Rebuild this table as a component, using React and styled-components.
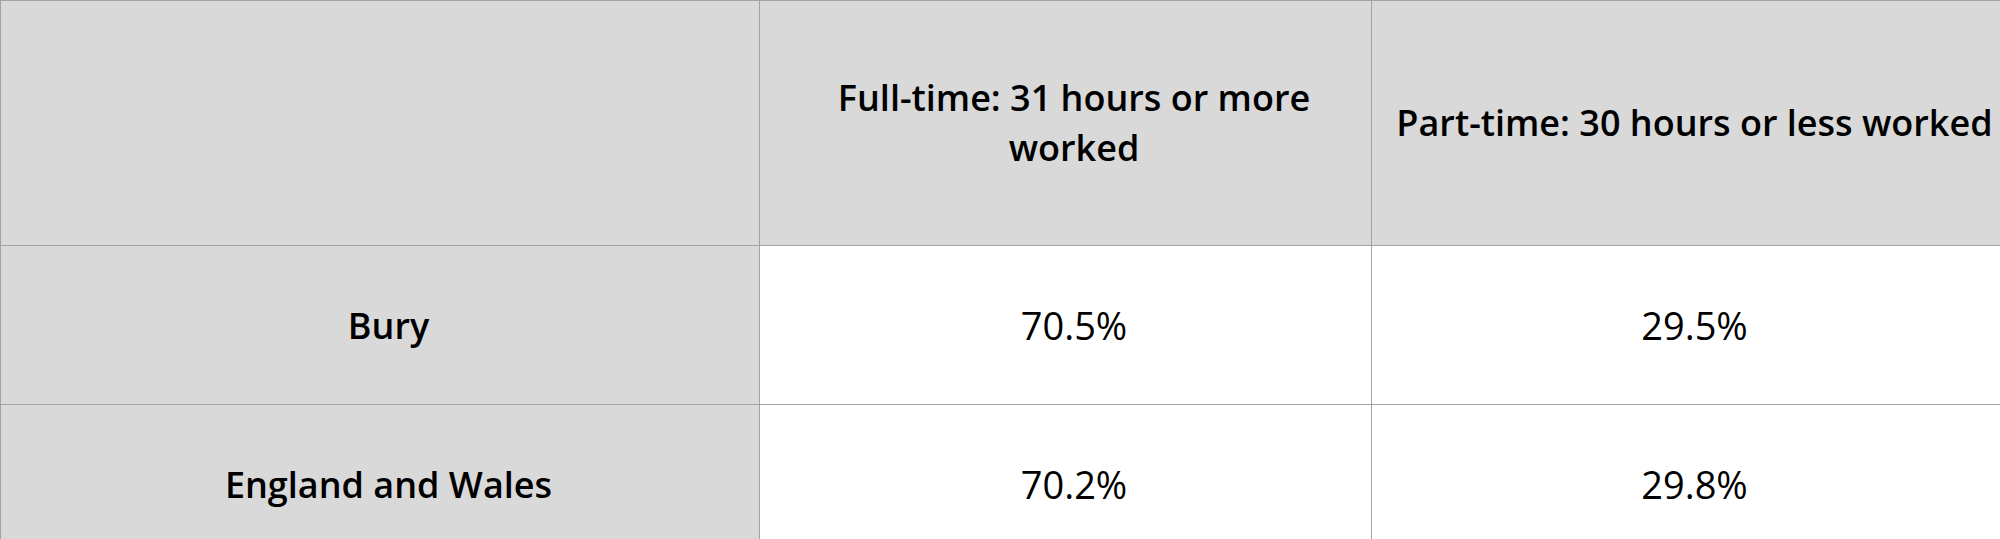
import styled, { createGlobalStyle } from "styled-components";

const GlobalStyle = createGlobalStyle`
  html, body {
    margin: 0;
    padding: 0;
    background: #ffffff;
    overflow: hidden;
  }
`;

const Table = styled.table`
  width: 2000px;
  table-layout: fixed;
  border-collapse: collapse;
  font-family: "Open Sans", "Liberation Sans", sans-serif;
  color: #000;
`;

const Col = styled.col`
  width: ${(p) => p.$w}px;
`;

const Row = styled.tr`
  height: ${(p) => p.$h}px;
`;

const Cell = styled.td`
  padding: 0 0 0 17px;
  border: 1px solid #a3a3a3;
  text-align: center;
  vertical-align: middle;
  background: ${(p) => (p.$shaded ? "#d9d9d9" : "#ffffff")};
  font-size: ${(p) => (p.$bold ? "36px" : "38px")};
  font-weight: ${(p) => (p.$bold ? 600 : 400)};
`;

const HeadCell = styled.th`
  padding: 0 0 0 17px;
  border: 1px solid #a3a3a3;
  text-align: center;
  vertical-align: middle;
  background: #d9d9d9;
  font-size: 36px;
  line-height: 50px;
  font-weight: 600;
`;

const rows = [
  { area: "Bury", full: "70.5%", part: "29.5%" },
  { area: "England and Wales", full: "70.2%", part: "29.8%" },
];

export default function App() {
  return (
    <>
      <GlobalStyle />
      <Table>
        <colgroup>
          <Col $w={759} />
          <Col $w={612} />
          <Col $w={629} />
        </colgroup>
        <thead>
          <Row $h={245}>
            <HeadCell />
            <HeadCell>Full-time: 31 hours or more worked</HeadCell>
            <HeadCell>Part-time: 30 hours or less worked</HeadCell>
          </Row>
        </thead>
        <tbody>
          {rows.map((r) => (
            <Row key={r.area} $h={159}>
              <Cell $shaded $bold>
                {r.area}
              </Cell>
              <Cell>{r.full}</Cell>
              <Cell>{r.part}</Cell>
            </Row>
          ))}
        </tbody>
      </Table>
    </>
  );
}
